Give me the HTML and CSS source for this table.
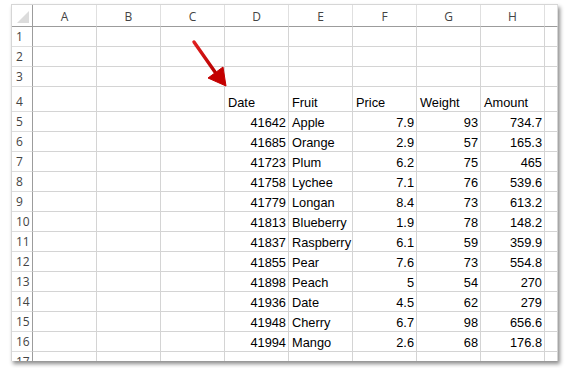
FILE: index.html
```html
<!DOCTYPE html>
<html>
<head>
<meta charset="utf-8">
<link rel="stylesheet" href="styles.css">
</head>
<body>
<div class="sheet">
  <div class="grid">
    <div class="corner"><span class="tri"></span></div>
    <div class="ch">A</div><div class="ch">B</div><div class="ch">C</div><div class="ch">D</div><div class="ch">E</div><div class="ch">F</div><div class="ch">G</div><div class="ch">H</div><div class="ch"></div>

    <div class="rh">1</div><div class="c"></div><div class="c"></div><div class="c"></div><div class="c"></div><div class="c"></div><div class="c"></div><div class="c"></div><div class="c"></div><div class="c"></div>
    <div class="rh">2</div><div class="c"></div><div class="c"></div><div class="c"></div><div class="c"></div><div class="c"></div><div class="c"></div><div class="c"></div><div class="c"></div><div class="c"></div>
    <div class="rh">3</div><div class="c"></div><div class="c"></div><div class="c"></div><div class="c"></div><div class="c"></div><div class="c"></div><div class="c"></div><div class="c"></div><div class="c"></div>
    <div class="rh">4</div><div class="c"></div><div class="c"></div><div class="c"></div><div class="c">Date</div><div class="c">Fruit</div><div class="c">Price</div><div class="c">Weight</div><div class="c">Amount</div><div class="c"></div>

    <div class="rh">5</div><div class="c"></div><div class="c"></div><div class="c"></div><div class="c n">41642</div><div class="c">Apple</div><div class="c n">7.9</div><div class="c n">93</div><div class="c n">734.7</div><div class="c"></div>
    <div class="rh">6</div><div class="c"></div><div class="c"></div><div class="c"></div><div class="c n">41685</div><div class="c">Orange</div><div class="c n">2.9</div><div class="c n">57</div><div class="c n">165.3</div><div class="c"></div>
    <div class="rh">7</div><div class="c"></div><div class="c"></div><div class="c"></div><div class="c n">41723</div><div class="c">Plum</div><div class="c n">6.2</div><div class="c n">75</div><div class="c n">465</div><div class="c"></div>
    <div class="rh">8</div><div class="c"></div><div class="c"></div><div class="c"></div><div class="c n">41758</div><div class="c">Lychee</div><div class="c n">7.1</div><div class="c n">76</div><div class="c n">539.6</div><div class="c"></div>
    <div class="rh">9</div><div class="c"></div><div class="c"></div><div class="c"></div><div class="c n">41779</div><div class="c">Longan</div><div class="c n">8.4</div><div class="c n">73</div><div class="c n">613.2</div><div class="c"></div>
    <div class="rh">10</div><div class="c"></div><div class="c"></div><div class="c"></div><div class="c n">41813</div><div class="c">Blueberry</div><div class="c n">1.9</div><div class="c n">78</div><div class="c n">148.2</div><div class="c"></div>
    <div class="rh">11</div><div class="c"></div><div class="c"></div><div class="c"></div><div class="c n">41837</div><div class="c">Raspberry</div><div class="c n">6.1</div><div class="c n">59</div><div class="c n">359.9</div><div class="c"></div>
    <div class="rh">12</div><div class="c"></div><div class="c"></div><div class="c"></div><div class="c n">41855</div><div class="c">Pear</div><div class="c n">7.6</div><div class="c n">73</div><div class="c n">554.8</div><div class="c"></div>
    <div class="rh">13</div><div class="c"></div><div class="c"></div><div class="c"></div><div class="c n">41898</div><div class="c">Peach</div><div class="c n">5</div><div class="c n">54</div><div class="c n">270</div><div class="c"></div>
    <div class="rh">14</div><div class="c"></div><div class="c"></div><div class="c"></div><div class="c n">41936</div><div class="c">Date</div><div class="c n">4.5</div><div class="c n">62</div><div class="c n">279</div><div class="c"></div>
    <div class="rh">15</div><div class="c"></div><div class="c"></div><div class="c"></div><div class="c n">41948</div><div class="c">Cherry</div><div class="c n">6.7</div><div class="c n">98</div><div class="c n">656.6</div><div class="c"></div>
    <div class="rh">16</div><div class="c"></div><div class="c"></div><div class="c"></div><div class="c n">41994</div><div class="c">Mango</div><div class="c n">2.6</div><div class="c n">68</div><div class="c n">176.8</div><div class="c"></div>
    <div class="rh">17</div><div class="c"></div><div class="c"></div><div class="c"></div><div class="c"></div><div class="c"></div><div class="c"></div><div class="c"></div><div class="c"></div><div class="c"></div>
  </div>
  <svg class="arrow" width="50" height="60" viewBox="0 0 50 60">
    <defs>
      <linearGradient id="ag" x1="0" y1="0" x2="1" y2="1">
        <stop offset="0" stop-color="#e02020"/>
        <stop offset="1" stop-color="#b80000"/>
      </linearGradient>
    </defs>
    <path d="M5 3 L26 33" stroke="url(#ag)" stroke-width="3.4" stroke-linecap="round" fill="none"/>
    <path d="M19 39 L34 28 L37 47 Z" fill="#c40000" stroke="#c40000" stroke-width="1" stroke-linejoin="round"/>
  </svg>
</div>
</body>
</html>
```
FILE: styles.css
```css
html, body {
  margin: 0;
  padding: 0;
  background: #ffffff;
}
body {
  width: 569px;
  height: 368px;
  overflow: hidden;
  font-family: "Liberation Sans", Arial, sans-serif;
}
.sheet {
  position: relative;
  margin: 4px 0 0 11px;
  width: 546px;
  height: 356px;
  border-top: 1px solid #d6d6d6;
  border-left: 1px solid #d6d6d6;
  box-shadow: 2px 3px 4px rgba(0, 0, 0, 0.45);
  overflow: hidden;
  background: #fff;
}
.grid {
  display: grid;
  grid-template-columns: 21px repeat(8, 64px) 13px;
  grid-template-rows: 22px 20px 20px 20px 25px repeat(12, 20px) 20px;
}
.grid > div {
  box-sizing: border-box;
  border-right: 1px solid #d4d4d4;
  border-bottom: 1px solid #d4d4d4;
  white-space: nowrap;
}
.corner {
  position: relative;
  border-right: 1px solid #9c9c9c !important;
  border-bottom: 1px solid #9c9c9c !important;
}
.tri {
  position: absolute;
  right: 3px;
  bottom: 3px;
  width: 0;
  height: 0;
  border-left: 12px solid transparent;
  border-bottom: 12px solid #dcdcdc;
}
.ch {
  border-right-color: #e0e0e0 !important;
  border-bottom: 1px solid #9c9c9c !important;
  display: flex;
  align-items: center;
  justify-content: center;
  font-family: "Open Sans", "Liberation Sans", sans-serif;
  font-size: 12px;
  color: #444;
  padding-top: 1px;
}
.rh {
  border-right: 1px solid #9c9c9c !important;
  border-bottom-color: #dedede !important;
  display: flex;
  align-items: flex-end;
  padding: 0 0 1px 4px;
  font-family: "Open Sans", "Liberation Sans", sans-serif;
  font-size: 12px;
  color: #444;
}
.c {
  display: flex;
  align-items: flex-end;
  padding: 0 2px 1px 3px;
  font-size: 12.8px;
  color: #000;
  overflow: visible;
}
.n {
  justify-content: flex-end;
  padding-right: 2px;
}
.arrow {
  position: absolute;
  left: 177px;
  top: 34px;
}
```
